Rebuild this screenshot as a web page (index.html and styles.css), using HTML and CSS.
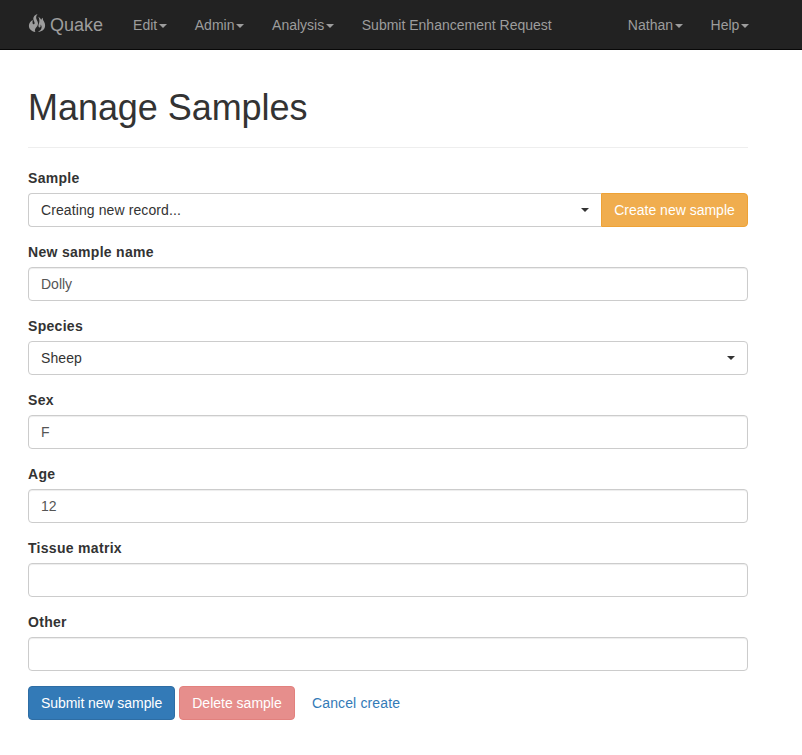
FILE: index.html
```html
<!DOCTYPE html>
<html lang="en">
<head>
<meta charset="utf-8">
<title>Manage Samples</title>
<link rel="stylesheet" href="styles.css">
</head>
<body>
<nav class="navbar">
  <div class="container navbar-inner">
    <a class="brand" href="#"><svg class="fire" viewBox="0 0 18 18" aria-hidden="true"><path d="M9.600 0C7 .8 5.300 2.500 5.300 4.700c0 1.900 1.300 2.700 1.300 4.200 0 .9-.4 1.400-1 1.400-1.100 0-1.300-1.700-.8-4.300C2.400 7.300.9 9.200.9 11.700c0 3.200 2.400 5.700 6.500 6.200-.8-1.100-.6-2.300.2-3.600.9-1.500 2.400-2.600 2.400-4.900 0-2-1.500-3.500-1.800-5.200-.2-1.600.3-3 1.400-4.200z"/><path d="M10.300 2.800c.9 1.800 1.300 3.600 1 5.300-.3 1.800-1.100 3-.8 4.400.2 1.100 1.600 1.200 2 .2.200-.6.200-1.300 0-2.100 1 1 1.400 2.200 1 3.500-.4 1.600-1.600 2.800-3.600 3.800 4.500-.3 7.200-2.700 7.200-6.600 0-2.300-1.100-3.600-1.900-5-.4-.8-.5-1.500-.3-2.500-1 .5-1.600 1.300-1.800 2.300-.3-1.400-1.200-2.500-2.800-3.300z"/></svg><span>Quake</span></a>
    <ul class="nav">
      <li><a href="#">Edit<b class="caret"></b></a></li>
      <li><a href="#">Admin<b class="caret"></b></a></li>
      <li><a href="#">Analysis<b class="caret"></b></a></li>
      <li><a href="#">Submit Enhancement Request</a></li>
    </ul>
    <ul class="nav nav-right">
      <li><a href="#">Nathan<b class="caret"></b></a></li>
      <li><a href="#">Help<b class="caret"></b></a></li>
    </ul>
  </div>
</nav>
<main class="container">
  <header class="page-header"><h1>Manage Samples</h1></header>
  <form>
    <div class="form-group">
      <label>Sample</label>
      <div class="input-group">
        <button type="button" class="select select-joined"><span>Creating new record...</span><b class="caret"></b></button>
        <button type="button" class="btn btn-warning">Create new sample</button>
      </div>
    </div>
    <div class="form-group">
      <label for="name">New sample name</label>
      <input class="control" id="name" type="text" value="Dolly">
    </div>
    <div class="form-group">
      <label>Species</label>
      <button type="button" class="select"><span>Sheep</span><b class="caret"></b></button>
    </div>
    <div class="form-group">
      <label for="sex">Sex</label>
      <input class="control" id="sex" type="text" value="F">
    </div>
    <div class="form-group">
      <label for="age">Age</label>
      <input class="control" id="age" type="text" value="12">
    </div>
    <div class="form-group">
      <label for="tissue">Tissue matrix</label>
      <input class="control" id="tissue" type="text">
    </div>
    <div class="form-group">
      <label for="other">Other</label>
      <input class="control" id="other" type="text">
    </div>
    <div class="actions">
      <button type="button" class="btn btn-primary">Submit new sample</button>
      <button type="button" class="btn btn-danger" disabled>Delete sample</button>
      <button type="button" class="btn btn-link">Cancel create</button>
    </div>
  </form>
</main>
</body>
</html>
```
FILE: styles.css
```css
* { box-sizing: border-box; }
body {
  margin: 0;
  background: #fff;
  color: #333;
  font: 14px/20px "Liberation Sans", Arial, sans-serif;
}
a { color: inherit; text-decoration: none; }
.container { width: 750px; margin-left: 13px; padding: 0 15px; }

.navbar { height: 50px; background: #222; border-bottom: 1px solid #080808; color: #9d9d9d; }
.navbar-inner { display: flex; }
.brand { display: flex; gap: 4px; padding: 15px 15px 15px 0; font-size: 18px; }
.fire { width: 18px; height: 18px; margin-top: -1px; fill: currentColor; }
.nav { display: flex; margin: 0; padding: 0; list-style: none; }
.nav a { display: block; padding: 15px; white-space: nowrap; }
.nav-right { margin-left: auto; margin-right: -14px; }

.caret {
  display: inline-block;
  width: 0;
  height: 0;
  vertical-align: middle;
  border-top: 4px solid;
  border-left: 4px solid transparent;
  border-right: 4px solid transparent;
}
.nav .caret { margin: 0 -2px 0 1.6px; }

.page-header { margin: 38px 0 20px; padding-bottom: 19px; border-bottom: 1px solid #eee; }
h1 { margin: 0; font-size: 36px; font-weight: 500; line-height: 40px; letter-spacing: -.05px; }

.form-group { margin-bottom: 15px; }
label { display: block; margin-bottom: 5px; font-weight: 700; letter-spacing: .3px; }
.control, .select {
  display: block;
  width: 100%;
  height: 34px;
  padding: 6px 12px;
  border: 1px solid #ccc;
  border-radius: 4px;
  background: #fff;
  font: inherit;
}
.control { color: #555; box-shadow: inset 0 1px 1px rgba(0, 0, 0, .075); }
.select { display: flex; align-items: center; justify-content: space-between; color: #333; letter-spacing: .1px; }
.input-group { display: flex; }
.select-joined { flex: 1; border-right: 0; border-radius: 4px 0 0 4px; }

.btn {
  height: 34px;
  padding: 6px 12px;
  border: 1px solid transparent;
  border-radius: 4px;
  color: #fff;
  font: inherit;
  white-space: nowrap;
}
.btn-warning { width: 147px; border-color: #eea236; border-radius: 0 4px 4px 0; background: #f0ad4e; }
.btn-primary { width: 147px; border-color: #2e6da4; background: #337ab7; letter-spacing: -.06px; }
.btn-danger { width: 116px; border-color: #d43f3a; background: #d9534f; opacity: .65; }
.btn-link { background: none; color: #337ab7; letter-spacing: .13px; }
.actions { display: flex; gap: 4px; }
```
